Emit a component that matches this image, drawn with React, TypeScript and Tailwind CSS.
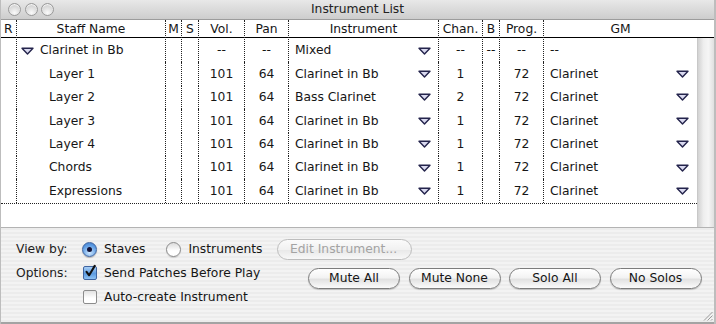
import React from "react";

type Row = {
  name: string;
  group?: boolean;
  vol: string;
  pan: string;
  inst: string;
  chan: string;
  b: string;
  prog: string;
  gm: string;
};

const rows: Row[] = [
  { name: "Clarinet in Bb", group: true, vol: "--", pan: "--", inst: "Mixed", chan: "--", b: "--", prog: "--", gm: "--" },
  { name: "Layer 1", vol: "101", pan: "64", inst: "Clarinet in Bb", chan: "1", b: "", prog: "72", gm: "Clarinet" },
  { name: "Layer 2", vol: "101", pan: "64", inst: "Bass Clarinet", chan: "2", b: "", prog: "72", gm: "Clarinet" },
  { name: "Layer 3", vol: "101", pan: "64", inst: "Clarinet in Bb", chan: "1", b: "", prog: "72", gm: "Clarinet" },
  { name: "Layer 4", vol: "101", pan: "64", inst: "Clarinet in Bb", chan: "1", b: "", prog: "72", gm: "Clarinet" },
  { name: "Chords", vol: "101", pan: "64", inst: "Clarinet in Bb", chan: "1", b: "", prog: "72", gm: "Clarinet" },
  { name: "Expressions", vol: "101", pan: "64", inst: "Clarinet in Bb", chan: "1", b: "", prog: "72", gm: "Clarinet" },
];

// column widths shared by header + rows
const grid =
  "grid grid-cols-[16px_149px_16px_17px_46px_44px_150px_44px_17px_44px_153px]";
const sep = "border-r border-dotted border-[#222] h-full flex items-center";

const Tri = () => (
  <svg width="13" height="8" viewBox="0 0 13 8">
    <path
      d="M1 1.2 H12 L6.5 7 Z"
      fill="#dadaf0"
      stroke="#24244c"
      strokeWidth="1.4"
      strokeLinejoin="round"
    />
  </svg>
);

const Light = () => (
  <span className="w-[13px] h-[13px] rounded-full border border-[#9a9a9a] bg-[radial-gradient(circle_at_50%_80%,#fafafa,#d6d6d6_65%,#bdbdbd)] shadow-[inset_0_1px_1px_rgba(255,255,255,0.9)]" />
);

const Radio = ({ on, label }: { on?: boolean; label: string }) => (
  <div className="flex items-center gap-[7px]">
    {on ? (
      <span className="w-[15px] h-[15px] rounded-full border border-[#3f64a0] bg-[radial-gradient(circle_at_50%_75%,#cfe8ff,#5b9ae2_65%,#3f78c8)] flex items-center justify-center shadow-[0_1px_1px_rgba(0,0,0,0.25)]">
        <span className="w-[5px] h-[5px] rounded-full bg-[#121236]" />
      </span>
    ) : (
      <span className="w-[15px] h-[15px] rounded-full border border-[#8a8a8a] bg-[linear-gradient(#dcdcdc,#ffffff_60%)] shadow-[0_1px_1px_rgba(0,0,0,0.15)]" />
    )}
    <span>{label}</span>
  </div>
);

const Check = ({ on, label }: { on?: boolean; label: string }) => (
  <div className="flex items-center gap-[7px] pl-[1px]">
    {on ? (
      <span className="w-[14px] h-[14px] rounded-[2px] border border-[#3f64a0] bg-[linear-gradient(#a9cff6,#5d9be0_55%,#8ec2f3)] flex items-center justify-center">
        <svg width="14" height="16" viewBox="0 0 14 16" className="-mt-[4px]">
          <path d="M3 9 L6 13 L12.5 2" fill="none" stroke="#111" strokeWidth="2.4" strokeLinecap="round" strokeLinejoin="round" />
        </svg>
      </span>
    ) : (
      <span className="w-[14px] h-[14px] rounded-[2px] border border-[#8c8c8c] bg-[linear-gradient(#e2e2e2,#ffffff_60%)]" />
    )}
    <span>{label}</span>
  </div>
);

const Btn = ({ label }: { label: string }) => (
  <div className="w-[92px] h-[21px] rounded-full border border-[#7c7c7c] bg-[linear-gradient(#ffffff,#f3f3f3_45%,#e2e2e2_55%,#fbfbfb)] shadow-[0_1px_1px_rgba(0,0,0,0.2)] flex items-center justify-center">
    {label}
  </div>
);

export default function App() {
  return (
    <div className="w-[716px] h-[324px] flex flex-col bg-white border-l border-r-2 border-[#bdbdbd] font-['DejaVu_Sans',sans-serif] text-[12.3px] text-[#161616] overflow-hidden">
      {/* title bar */}
      <div className="h-[20px] shrink-0 grid grid-cols-[1fr_auto_1fr] items-center bg-[linear-gradient(#e8e8e8,#cdcdcd)] border-b border-[#9c9c9c]">
        <div className="flex items-center gap-[3.5px] pl-[7px]">
          <Light />
          <Light />
          <Light />
        </div>
        <div className="text-[#222]">Instrument List</div>
        <div />
      </div>

      {/* column header */}
      <div className="h-[18px] shrink-0 flex border-b border-black">
        <div className={`${grid} w-[696px]`}>
          <div className={`${sep} pl-[3px]`}>R</div>
          <div className={`${sep} justify-center`}>Staff Name</div>
          <div className={`${sep} justify-center`}>M</div>
          <div className={`${sep} justify-center`}>S</div>
          <div className={`${sep} justify-center`}>Vol.</div>
          <div className={`${sep} justify-center`}>Pan</div>
          <div className={`${sep} justify-center`}>Instrument</div>
          <div className={`${sep} justify-center`}>Chan.</div>
          <div className={`${sep} justify-center`}>B</div>
          <div className={`${sep} justify-center`}>Prog.</div>
          <div className="h-full flex items-center justify-center">GM</div>
        </div>
      </div>

      {/* list body */}
      <div className="h-[189px] shrink-0 flex">
        <div className="w-[696px]">
          <div className="border-b border-dotted border-[#222] pt-[1px]">
            {rows.map((r) => (
              <div key={r.name} className={`${grid} h-[23.4px]`}>
                <div className={sep} />
                <div className={`${sep} ${r.group ? "pl-[4px] gap-[6px]" : "pl-[32px]"}`}>
                  {r.group && <Tri />}
                  <span>{r.name}</span>
                </div>
                <div className={sep} />
                <div className={sep} />
                <div className={`${sep} justify-center`}>{r.vol}</div>
                <div className={`${sep} justify-center`}>{r.pan}</div>
                <div className={`${sep} justify-between pl-[6px] pr-[7px]`}>
                  <span>{r.inst}</span>
                  <Tri />
                </div>
                <div className={`${sep} justify-center`}>{r.chan}</div>
                <div className={`${sep} justify-center`}>{r.b}</div>
                <div className={`${sep} justify-center`}>{r.prog}</div>
                <div className="h-full flex items-center justify-between pl-[6px] pr-[8px]">
                  <span>{r.gm}</span>
                  {!r.group && <Tri />}
                </div>
              </div>
            ))}
          </div>
        </div>
        {/* empty scroll track */}
        <div className="w-[17px] h-full bg-[linear-gradient(to_right,#d2d2d2,#eeeeee_35%,#f5f5f5_65%,#e0e0e0)] border-l border-[#c8c8c8]" />
      </div>

      {/* options panel */}
      <div className="flex-1 flex border-t border-[#b3b3b3] border-b-2 border-b-[#a3a3a3] bg-[repeating-linear-gradient(#ececec_0px,#ececec_2px,#f3f3f3_2px,#f3f3f3_4px)] pt-[9px]">
        <div className="w-[276px] shrink-0 pl-[15px] grid grid-cols-[66px_auto] auto-rows-[24px] items-center">
          <span className="text-[#222]">View by:</span>
          <div className="flex items-center gap-[21px]">
            <Radio on label="Staves" />
            <Radio label="Instruments" />
          </div>
          <span className="text-[#222]">Options:</span>
          <Check on label="Send Patches Before Play" />
          <span />
          <Check label="Auto-create Instrument" />
        </div>

        <div className="flex flex-col pt-[2px]">
          <div className="w-[135px] h-[21px] rounded-full border border-[#bdbdbd] bg-[linear-gradient(#fbfbfb,#f1f1f1_50%,#e9e9e9_55%,#f8f8f8)] flex items-center pl-[12px] text-[#a3a3a3]">
            Edit Instrument...
          </div>
          <div className="flex gap-[8.5px] mt-[8px] ml-[31px]">
            <Btn label="Mute All" />
            <Btn label="Mute None" />
            <Btn label="Solo All" />
            <Btn label="No Solos" />
          </div>
        </div>

        <div className="ml-auto self-end mb-[1px] mr-[1px]">
          <svg width="10" height="10" viewBox="0 0 10 10">
            <path d="M9.5 1 L1 9.5 M9.5 4.5 L4.5 9.5 M9.5 8 L8 9.5" stroke="#9a9a9a" strokeWidth="1" />
          </svg>
        </div>
      </div>
    </div>
  );
}
